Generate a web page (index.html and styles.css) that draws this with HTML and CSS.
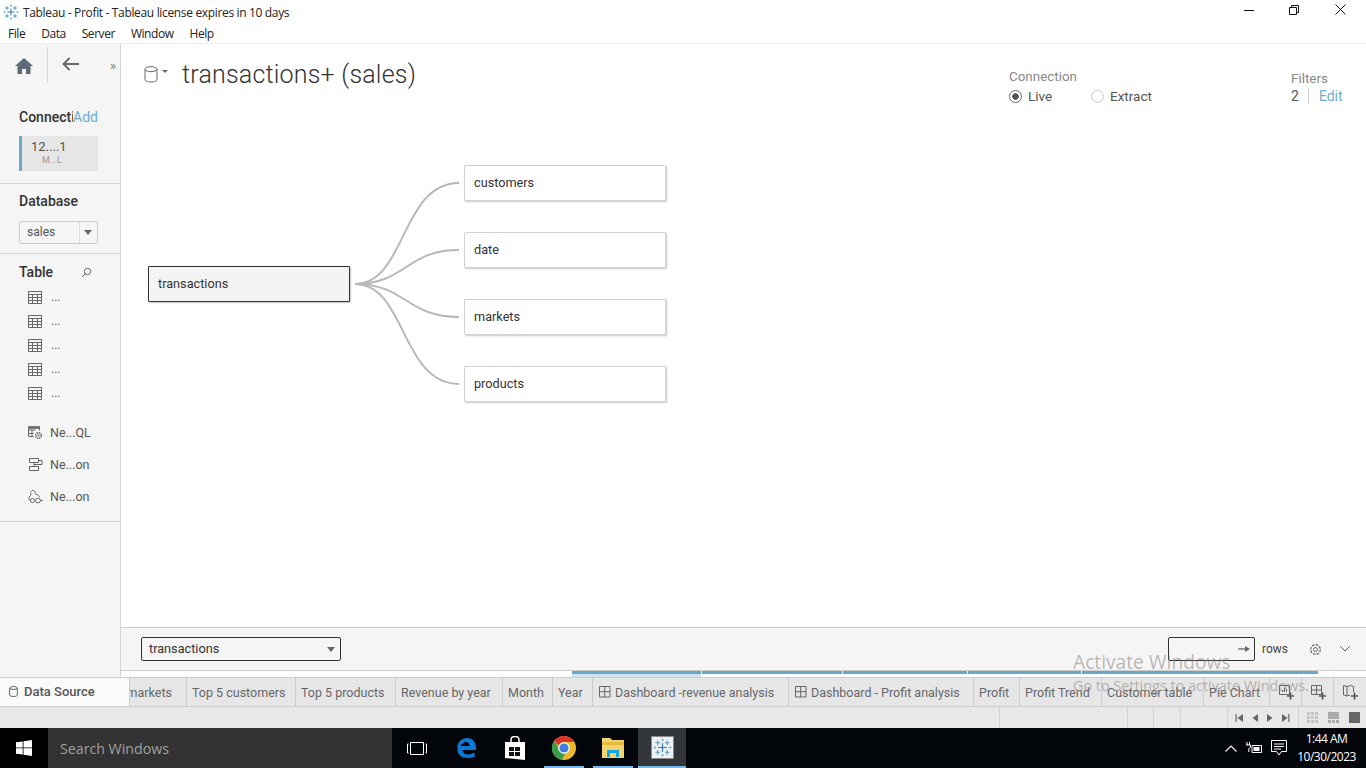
FILE: index.html
```html
<!DOCTYPE html>
<html lang="en">
<head>
<meta charset="utf-8">
<title>Tableau - Profit</title>
<link rel="stylesheet" href="styles.css">
</head>
<body>
<svg class="defs" width="0" height="0" aria-hidden="true">
  <symbol id="grid" viewBox="0 0 14 13">
    <path d="M.5.5h13v12H.5zM.5 3.500h13M.5 6.500h13M.5 9.500h13M4.500 3.500v9M9.500 3.500v9" fill="none" stroke="#666"/>
  </symbol>
  <symbol id="dash" viewBox="0 0 12 12">
    <path d="M.5.5h10.500v10.500H.5zM5.700.5v10.500M.5 5.700h10.500" fill="none" stroke="#666"/>
  </symbol>
  <symbol id="logo" viewBox="0 0 20 20">
    <g fill="none" stroke-width="1.300">
      <path d="M10 5.500v9M5.500 10h9" stroke="#2f78b0"/>
      <path d="M5 2.500v5M2.500 5h5M15 2.500v5M12.500 5h5M5 12.500v5M2.500 15h5M15 12.500v5M12.500 15h5" stroke="#5f9fcb"/>
      <path d="M10 .5v3M8.500 2h3M10 16.500v3M8.500 18h3M2 8.500v3M.5 10h3M18 8.500v3M16.500 10h3" stroke="#8dbbd9"/>
    </g>
  </symbol>
</svg>

<header class="titlebar">
  <svg class="app-logo" width="16" height="16"><use href="#logo"/></svg>
  <span class="title-text">Tableau - Profit - Tableau license expires in 10 days</span>
  <div class="win-controls">
    <svg class="win-btn" width="12" height="12" viewBox="0 0 12 12"><path d="M1 6.500h10" stroke="#111" fill="none"/></svg>
    <svg class="win-btn" width="12" height="12" viewBox="0 0 12 12"><path d="M.5 3.500h7v7h-7zM2.500 3.500v-2h7v7h-2" stroke="#111" fill="none"/></svg>
    <svg class="win-btn" width="12" height="12" viewBox="0 0 12 12"><path d="M.5.5l10 10M10.500.5l-10 10" stroke="#111" fill="none"/></svg>
  </div>
</header>
<nav class="menubar">
  <span>File</span><span>Data</span><span>Server</span><span>Window</span><span>Help</span>
</nav>

<div class="workspace">
  <aside class="sidebar">
    <div class="side-top">
      <svg class="home" width="18" height="16" viewBox="0 0 18 16"><path d="M9 0L0 8h2.500v8h4.500v-5h4v5h4.500V8H18z" fill="#5f6a78"/></svg>
      <span class="side-rule"></span>
      <svg class="back" width="17" height="14" viewBox="0 0 17 14"><path d="M7.500 1L1.500 7l6 6M1.500 7H17" stroke="#666" stroke-width="1.800" fill="none"/></svg>
      <span class="collapse">»</span>
    </div>
    <div class="side-conn">
      <div class="side-head"><b class="clip">Connecti</b><span class="add">Add</span></div>
      <div class="chip"><span class="chip-main">12....1</span><span class="chip-sub">M...L</span></div>
    </div>
    <div class="side-db">
      <b class="side-title">Database</b>
      <div class="db-select"><span class="db-value">sales</span><span class="db-arrow"><i class="caret"></i></span></div>
    </div>
    <div class="side-tables">
      <div class="table-head">
        <b class="side-title">Table</b>
        <svg width="11" height="11" viewBox="0 0 11 11"><circle cx="6.500" cy="4.500" r="3.200" fill="none" stroke="#666"/><path d="M4.200 6.800L1 10" stroke="#666"/></svg>
      </div>
      <ul class="table-list">
        <li><svg width="14" height="13"><use href="#grid"/></svg><span>...</span></li>
        <li><svg width="14" height="13"><use href="#grid"/></svg><span>...</span></li>
        <li><svg width="14" height="13"><use href="#grid"/></svg><span>...</span></li>
        <li><svg width="14" height="13"><use href="#grid"/></svg><span>...</span></li>
        <li><svg width="14" height="13"><use href="#grid"/></svg><span>...</span></li>
      </ul>
      <ul class="new-list">
        <li>
          <svg width="15" height="15" viewBox="0 0 15 15"><path d="M.5 1.500h11v4M.5 1.500v10h5M.5 5h7M.5 8.500h5M4 5v6.500" fill="none" stroke="#666"/><path d="M.5 1h11v3H.5z" fill="#777"/><circle cx="10.500" cy="10.500" r="2.800" fill="none" stroke="#666" stroke-width="1.500" stroke-dasharray="1.500 .7"/><circle cx="10.500" cy="10.500" r="1" fill="#666"/></svg>
          <span>Ne...QL</span>
        </li>
        <li>
          <svg width="15" height="15" viewBox="0 0 15 15"><path d="M1.500 1.500h9v4h-9zM1.500 9.500h9v4h-9zM6 5.500v4M10.500 3.500H14v4H6" fill="none" stroke="#666"/></svg>
          <span>Ne...on</span>
        </li>
        <li>
          <svg width="15" height="15" viewBox="0 0 15 15"><path d="M5 1l2 1.500 .5 2.500 2.500 1 2 2M5 1L2.500 3.500 3 6 1 8v3h1" fill="none" stroke="#777"/><circle cx="4.500" cy="11.500" r="2" fill="none" stroke="#666"/><circle cx="10" cy="11.500" r="2.400" fill="none" stroke="#666"/><path d="M15 11.500h-2.500" stroke="#666"/></svg>
          <span>Ne...on</span>
        </li>
      </ul>
    </div>
  </aside>

  <main class="content">
    <div class="ds-head">
      <div class="ds-title">
        <svg width="15" height="17" viewBox="0 0 15 17"><ellipse cx="7" cy="3.200" rx="6" ry="2.500" fill="none" stroke="#666"/><path d="M1 3.200v10.300c0 1.500 2.800 2.500 6 2.500s6-1 6-2.500V3.200" fill="none" stroke="#666"/></svg>
        <i class="caret caret-sm"></i>
        <h1>transactions+ (sales)</h1>
      </div>
      <div class="ds-options">
        <div class="conn-group">
          <span class="label">Connection</span>
          <div class="radios">
            <span class="radio-item live"><i class="radio on"></i>Live</span>
            <span class="radio-item"><i class="radio"></i>Extract</span>
          </div>
        </div>
        <div class="filter-group">
          <span class="label">Filters</span>
          <div class="filter-row"><span class="count">2</span><a class="edit">Edit</a></div>
        </div>
      </div>
    </div>

    <div class="canvas">
      <svg class="links" width="1245" height="523">
        <g fill="none" stroke="#b8b8b8" stroke-width="2">
          <path d="M234 180C285 180 280 79 338 79"/>
          <path d="M234 180C285 180 285 146 338 146"/>
          <path d="M234 180C285 180 285 213 338 213"/>
          <path d="M234 180C285 180 280 280 338 280"/>
        </g>
      </svg>
      <div class="node root">transactions</div>
      <div class="node n1">customers</div>
      <div class="node n2">date</div>
      <div class="node n3">markets</div>
      <div class="node n4">products</div>
    </div>

    <div class="preview-bar">
      <div class="table-select"><span>transactions</span><i class="caret"></i></div>
      <div class="preview-right">
        <div class="rows-box"><svg width="12" height="8" viewBox="0 0 12 8"><path d="M0 4h8" stroke="#666" stroke-width="1.300"/><path d="M7 1l5 3-5 3z" fill="#666"/></svg></div>
        <span class="rows-label">rows</span>
        <svg class="gear" width="13" height="13" viewBox="0 0 13 13"><circle cx="6.500" cy="6.500" r="4.800" fill="none" stroke="#666" stroke-width="1.300" stroke-dasharray="2.500 1.200"/><circle cx="6.500" cy="6.500" r="2" fill="none" stroke="#666"/></svg>
        <svg width="10" height="6" viewBox="0 0 10 6"><path d="M.5.500L5 5 9.500.500" fill="none" stroke="#555"/></svg>
      </div>
    </div>
    <div class="scroll-strip"><div class="scroll-blue"><i class="s1"></i><i class="s2"></i><i class="s3"></i><i class="s4"></i><i class="s5"></i></div></div>
  </main>
</div>

<div class="tabs">
  <div class="tab-ds">
    <svg width="9" height="11" viewBox="0 0 9 11"><ellipse cx="4.500" cy="2" rx="3.800" ry="1.500" fill="none" stroke="#666"/><path d="M.7 2v7c0 .9 1.700 1.500 3.800 1.500S8.300 9.900 8.300 9V2" fill="none" stroke="#666"/></svg>
    <b>Data Source</b>
  </div>
  <div class="tab t-markets"><span class="clipped">markets</span></div>
  <div class="tab t-cust">Top 5 customers</div>
  <div class="tab t-prod">Top 5 products</div>
  <div class="tab t-rev">Revenue by year</div>
  <div class="tab t-month">Month</div>
  <div class="tab t-year">Year</div>
  <div class="tab t-dash t-d1"><svg width="12" height="12"><use href="#dash"/></svg>Dashboard -revenue analysis</div>
  <div class="tab t-dash t-d2"><svg width="12" height="12"><use href="#dash"/></svg>Dashboard - Profit analysis</div>
  <div class="tab t-profit">Profit</div>
  <div class="tab t-trend">Profit Trend</div>
  <div class="tab t-ctable">Customer table</div>
  <div class="tab t-pie">Pie Chart</div>
  <div class="tab t-add">
    <svg width="16" height="16" viewBox="0 0 16 16"><path d="M.5 1.500h10v9h-10z" fill="none" stroke="#666"/><path d="M3.500 8V6M5.500 8V3.500M7.500 8V5" stroke="#666"/><path d="M11.500 8.500v7M8 12h7" stroke="#555" stroke-width="1.600"/></svg>
  </div>
  <div class="tab t-add">
    <svg width="16" height="16" viewBox="0 0 16 16"><path d="M.5 1.500h10v9h-10zM5.500 1.500v9M.5 6h10" fill="none" stroke="#666"/><path d="M11.500 8.500v7M8 12h7" stroke="#555" stroke-width="1.600"/></svg>
  </div>
  <div class="tab t-add t-last">
    <svg width="16" height="16" viewBox="0 0 16 16"><path d="M.5 1.500L4 2.500 7.500 1.500 10.500 2.500V8M.5 1.500v9.500L4 12l3-1M4 2.500V12" fill="none" stroke="#666"/><path d="M11.500 8.500v7M8 12h7" stroke="#555" stroke-width="1.600"/></svg>
  </div>
</div>

<div class="statusbar">
  <span class="st st1"></span><span class="st st2"></span><span class="st st3"></span><span class="st st4"></span>
  <div class="pager">
    <svg width="8" height="8" viewBox="0 0 8 8"><path d="M.5 0h1.200v8H.5zM8 0v8L2.500 4z" fill="#666"/></svg>
    <svg width="6" height="8" viewBox="0 0 6 8"><path d="M6 0v8L.5 4z" fill="#666"/></svg>
    <svg width="6" height="8" viewBox="0 0 6 8"><path d="M0 0v8l5.500-4z" fill="#666"/></svg>
    <svg width="8" height="8" viewBox="0 0 8 8"><path d="M6.300 0h1.200v8H6.300zM0 0v8l5.500-4z" fill="#666"/></svg>
  </div>
  <div class="viewsize">
    <svg width="11" height="11" viewBox="0 0 11 11"><path d="M0 0h3v3H0zM4 0h3v3H4zM8 0h3v3H8zM0 4h3v3H0zM4 4h3v3H4zM8 4h3v3H8zM0 8h3v3H0zM4 8h3v3H4zM8 8h3v3H8z" fill="#c4c4c4"/></svg>
    <svg width="11" height="11" viewBox="0 0 11 11"><path d="M0 0h11v7H0zM0 8h3v3H0zM4 8h3v3H4zM8 8h3v3H8z" fill="#aaa"/></svg>
    <svg width="11" height="11" viewBox="0 0 11 11"><path d="M0 0h11v11H0z" fill="#666"/></svg>
  </div>
</div>

<footer class="taskbar">
  <div class="start">
    <svg width="16" height="16" viewBox="0 0 16 16"><path d="M0 2.300l6.700-.9v6.100H0zM7.500 1.300L16 0v7.500H7.500zM0 8.300h6.700v6.200L0 13.700zM7.500 8.300H16V16l-8.500-1.200z" fill="#fff"/></svg>
  </div>
  <div class="search">Search Windows</div>
  <div class="task-icons">
    <div class="task"><svg width="20" height="13" viewBox="0 0 20 13"><path d="M3.500.5h13v12h-13zM1.500 2H.5v9h1M18.500 2h1v9h-1" fill="none" stroke="#fff"/></svg></div>
    <div class="task"><svg width="20" height="20" viewBox="0 0 20 20"><path d="M1 9.500C2 3.500 6 0 11 0c5.500 0 9 4 9 10.500v1.500H6.500c.2 3 2.500 4.500 5.300 4.500 2.500 0 4.600-.8 6.700-2v4.500C16.500 19.500 14 20 11.500 20 5 20 1.500 16 1.500 11.500c0-3.500 2-6.500 5-8.200C5 5 4.300 6.500 4 8h9.500c0-2.500-1.200-4.300-4-4.300" fill="#0a78d7"/></svg></div>
    <div class="task"><svg width="20" height="24" viewBox="0 0 20 24"><path d="M0 6h20v18l-20-2z" fill="#fff"/><path d="M6 6V3.500C6 1.500 8 .5 10 .5s4 1 4 3V6" fill="none" stroke="#fff" stroke-width="1.500"/><path d="M4 11h5v4H4zM10 11h5v4h-5zM4 16h5v4H4zM10 16h5v4h-5z" fill="#111"/></svg></div>
    <div class="task open"><svg width="24" height="24" viewBox="0 0 24 24"><circle cx="12" cy="12" r="12" fill="#e8b92b"/><path d="M12 0a12 12 0 0 1 10.400 6H12a6 6 0 0 0-5.600 3.500L2.200 4.800A12 12 0 0 1 12 0z" fill="#d8352a"/><path d="M2.200 4.800l5.300 9.200A6 6 0 0 0 13 18L9.800 23.800A12 12 0 0 1 2.200 4.800z" fill="#3b9c4a"/><circle cx="12" cy="12" r="5.800" fill="#fff"/><circle cx="12" cy="12" r="4.600" fill="#3f7ee0"/></svg></div>
    <div class="task open"><svg width="22" height="20" viewBox="0 0 22 20"><path d="M0 0h8l2 2h12v18H0z" fill="#f2d46f"/><path d="M0 4h22v3H0z" fill="#e8bb3f"/><path d="M5 19v-7h12v7h-3v-4H8v4z" fill="#15a6e0"/></svg></div>
    <div class="task active"><span class="tb-tile"><svg width="19" height="19"><use href="#logo"/></svg></span></div>
  </div>
  <div class="tray">
    <svg width="12" height="7" viewBox="0 0 12 7"><path d="M.5 6.500L6 1l5.500 5.500" fill="none" stroke="#fff" stroke-width="1.100"/></svg>
    <svg width="16" height="12" viewBox="0 0 16 12"><path d="M6 3.500h9.500v7H6z" fill="none" stroke="#fff"/><path d="M7.500 5h6v4h-6z" fill="#fff"/><path d="M1 0v3M3.500 0v3M0 3h4.500v2L2.800 7v3" fill="none" stroke="#fff"/></svg>
    <svg width="16" height="16" viewBox="0 0 16 16"><path d="M.5.500h15v11h-5L8 15l-2.500-3.500h-5zM3 4h10M3 6.500h10M3 9h7" fill="none" stroke="#fff"/></svg>
    <div class="clock"><span>1:44 AM</span><span>10/30/2023</span></div>
  </div>
</footer>

<div class="watermark">
  <span class="wm-big">Activate Windows</span>
  <span class="wm-small">Go to Settings to activate Windows.</span>
</div>
</body>
</html>
```
FILE: styles.css
```css
* { box-sizing: border-box; }
html, body { margin: 0; padding: 0; }
body {
  width: 1366px; height: 768px; overflow: hidden; position: relative;
  display: flex; flex-direction: column;
  font-family: Roboto, "Liberation Sans", sans-serif; color: #444; background: #fff;
}
.defs { position: absolute; }
ul { list-style: none; margin: 0; padding: 0; }

.titlebar { height: 24px; display: flex; align-items: center; padding-left: 3px; flex: none; }
.app-logo { margin-right: 4px; }
.title-text { font: 12px "Open Sans", sans-serif; color: #222; letter-spacing: -.34px; }
.win-controls { margin-left: auto; display: flex; gap: 34px; padding-right: 19px; margin-top: -4px; }
.menubar { height: 20px; display: flex; align-items: center; padding-left: 8px; gap: 16px; border-bottom: 1px solid #eee; flex: none; font: 12px "Open Sans", sans-serif; color: #222; letter-spacing: -.45px; }

.workspace { height: 633px; display: flex; flex: none; }
.sidebar { width: 121px; flex: none; background: #f5f5f5; border-right: 1px solid #d4d4d4; display: flex; flex-direction: column; }
.side-top { height: 56px; position: relative; display: flex; align-items: flex-start; padding: 13px 0 0 15px; }
.side-rule { width: 1px; height: 35px; background: #d8d8d8; margin: -10px 14px 0 14px; }
.back { margin-top: 0; }
.home { margin-top: 1px; }
.collapse { margin-left: 31px; font-size: 13px; color: #777; margin-top: 1px; }
.side-conn { height: 84px; padding: 8px 0 0 19px; border-bottom: 1px solid #d4d4d4; }
.side-head { display: flex; height: 17px; align-items: center; font-size: 14px; }
.clip { width: 54px; overflow: hidden; color: #333; font-weight: 500; font-size: 14px; }
.add { color: #6cacd0; }
.chip { width: 79px; height: 35px; margin-top: 11px; background: #e6e6e6; border-left: 3px solid #6aa9c9; display: flex; flex-direction: column; align-items: flex-start; padding-left: 9px; line-height: 1; }
.chip-main { font-size: 13px; margin-top: 4px; color: #555; }
.chip-sub { font-size: 9px; margin-top: 3px; margin-left: 11px; color: #999; }
.side-db { height: 70px; padding: 9px 0 0 19px; border-bottom: 1px solid #d4d4d4; }
.side-title { display: block; font-size: 14px; font-weight: 500; color: #333; line-height: 17px; }
.db-select { width: 79px; height: 23px; margin-top: 11px; border: 1px solid #ccc; border-radius: 2px; background: #f5f5f5; display: flex; align-items: center; font-size: 12px; color: #555; padding-bottom: 1px; }
.db-value { flex: 1; padding-left: 7px; }
.db-arrow { width: 18px; height: 21px; margin-bottom: -1px; border-left: 1px solid #ddd; display: flex; align-items: center; justify-content: center; padding-right: 2px; }
.caret { display: inline-block; width: 0; height: 0; border-left: 4px solid transparent; border-right: 4px solid transparent; border-top: 5px solid #666; }
.caret-sm { border-left-width: 3px; border-right-width: 3px; border-top-width: 3px; margin: -6px 0 0 3px; }
.side-tables { height: 268px; border-bottom: 1px solid #d4d4d4; padding: 10px 0 0 0; }
.table-head { display: flex; align-items: center; justify-content: space-between; padding: 0 28px 0 19px; height: 17px; }
.table-list { margin-top: 4px; }
.table-list li { height: 24px; display: flex; align-items: center; padding-left: 28px; gap: 9px; font-size: 12px; color: #666; }
.new-list { margin-top: 11px; }
.new-list li { height: 32px; display: flex; align-items: center; padding-left: 28px; gap: 7px; font-size: 12.500px; color: #555; }

.content { width: 1245px; display: flex; flex-direction: column; position: relative; }
.ds-head { height: 60px; position: relative; display: flex; justify-content: space-between; flex: none; }
.ds-title { display: flex; align-items: center; padding: 0 0 0 23px; height: 60px; }
.ds-title h1 { margin: 0 0 0 14px; font-size: 25px; font-weight: 300; color: #333; white-space: nowrap; letter-spacing: .2px; }
.ds-options { display: flex; padding-top: 25px; }
.conn-group { width: 282px; }
.label { display: block; font-size: 13.400px; color: #888; line-height: 16px; }
.radios { display: flex; margin-top: 3px; font-size: 13.500px; color: #555; height: 16px; align-items: center; }
.radio-item { display: flex; align-items: center; gap: 6px; }
.radio-item.live { width: 82px; }
.radio { width: 13px; height: 13px; border-radius: 50%; border: 1px solid #c8c8c8; background: #fff; }
.radio.on { border-color: #666; background: radial-gradient(circle, #555 0 3px, #fff 3.500px); }
.filter-group { width: 75px; padding-top: 2px; }
.filter-row { display: flex; margin-top: 1px; font-size: 14px; height: 16px; align-items: center; }
.count { padding-right: 9px; border-right: 1px solid #ccc; color: #555; height: 16px; line-height: 16px; }
.edit { margin-left: 10px; color: #6cacd0; }

.canvas { height: 523px; position: relative; flex: none; }
.links { position: absolute; left: 0; top: 0; }
.node { position: absolute; width: 202px; height: 36px; background: #fff; border: 1px solid #d2d2d2; border-radius: 1px; box-shadow: 1px 1px 2px rgba(0,0,0,.22); font-size: 12.700px; color: #333; display: flex; align-items: center; padding: 0 0 2px 9px; left: 343px; }
.node.root { left: 27px; top: 162px; background: #f4f4f4; border-color: #333; }
.n1 { top: 61px; }
.n2 { top: 128px; }
.n3 { top: 195px; }
.n4 { top: 262px; }

.preview-bar { height: 44px; flex: none; background: #f5f5f5; border-top: 1px solid #ccc; border-bottom: 1px solid #ccc; display: flex; align-items: center; justify-content: space-between; padding: 0 16px 0 20px; }
.table-select { width: 200px; height: 24px; border: 1px solid #333; border-radius: 2px; background: #f5f5f5; display: flex; align-items: center; justify-content: space-between; padding: 0 5px 2px 7px; font-size: 12.700px; color: #333; }
.table-select .caret { margin-top: 2px; }
.preview-right { display: flex; align-items: center; }
.rows-box { width: 87px; height: 24px; border: 1px solid #333; border-radius: 2px; display: flex; align-items: center; justify-content: flex-end; padding-right: 4px; }
.rows-label { font-size: 12px; margin-left: 7px; width: 47px; color: #444; }
.gear { margin-right: 18px; }
.scroll-strip { height: 6px; flex: none; background: #fff; padding-left: 451px; }
.scroll-blue { display: flex; height: 6px; gap: 1px; width: 747px; }
.scroll-blue i { display: block; height: 3px; background: #66a8cb; }
.s1 { width: 129px; height: 6px !important; background: linear-gradient(#66a8cb 50%, #cfe2ee 50%) !important; }
.s2 { width: 140px; }
.s3 { width: 124px; }
.s4 { width: 113px; }
.s5 { width: 236px; }

.tabs { height: 30px; flex: none; display: flex; background: #e6e6e6; border-top: 1px solid #ccc; border-bottom: 1px solid #ccc; font-size: 12.500px; color: #666; }
.tab-ds { width: 130px; height: 30px; margin-top: -1px; background: #fafafa; border-top: 1px solid #ccc; border-bottom: 1px solid #ccc; border-right: 1px solid #ccc; display: flex; align-items: center; padding: 0 0 1px 9px; gap: 6px; font-size: 13px; }
.tab-ds b { font-weight: 500; color: #555; }
.tab { flex: none; border-right: 1px solid #ccc; display: flex; align-items: center; padding-left: 5px; gap: 6px; white-space: nowrap; overflow: hidden; }
.t-dash { padding-left: 6px; gap: 4px; }
.t-markets { width: 57px; padding-left: 0; }
.clipped { margin-left: 0; width: 42px; overflow: hidden; direction: rtl; }
.t-cust { width: 109px; }
.t-prod { width: 100px; }
.t-rev { width: 107px; }
.t-month { width: 50px; }
.t-year { width: 40px; }
.t-d1 { width: 196px; }
.t-d2 { width: 185px; }
.t-profit { width: 46px; }
.t-trend { width: 82px; }
.t-ctable { width: 102px; }
.t-pie { width: 66px; }
.t-add { width: 32px; padding-left: 9px; }
.t-last { flex: 1; border-right: 0; }

.statusbar { height: 21px; flex: none; background: #e8e8e8; position: relative; display: flex; justify-content: flex-end; }
.st { position: absolute; top: 0; width: 1px; height: 21px; background: #d0d0d0; }
.st1 { left: 999px; }
.st2 { left: 1127px; }
.st3 { left: 1153px; }
.st4 { left: 1180px; }
.pager { width: 72px; border-left: 1px solid #d0d0d0; border-right: 1px solid #d0d0d0; display: flex; align-items: center; padding-left: 7px; gap: 9px; }
.viewsize { width: 67px; display: flex; align-items: center; padding-left: 8px; gap: 10px; }

.taskbar { height: 40px; flex: none; background: #02060b; display: flex; align-items: stretch; }
.start { width: 48px; display: flex; align-items: center; justify-content: center; background: #000; }
.search { width: 344px; background: #333; color: #a0a0a0; font: 14.200px "Open Sans", sans-serif; display: flex; align-items: center; padding-left: 12px; }
.task-icons { display: flex; padding-left: 0; }
.task { width: 49px; display: flex; align-items: center; justify-content: center; position: relative; }
.task.open::after { content: ""; position: absolute; left: 5px; right: 4px; bottom: 0; height: 2px; background: #76b9ed; }
.task.active { background: #33373c; margin-left: 1px; width: 48px; border-bottom: 2px solid #76b9ed; }
.tb-tile { width: 23px; height: 23px; background: #eef2f5; border: 1px solid #888; display: flex; align-items: center; justify-content: center; }
.tray { margin-left: auto; display: flex; align-items: center; padding-right: 11px; gap: 9px; }
.clock { display: flex; flex-direction: column; align-items: center; font: 12px/18px "Open Sans", sans-serif; color: #fff; margin-left: 2px; width: 57px; letter-spacing: -.5px; white-space: nowrap; }

.watermark { position: absolute; left: 1073px; top: 649px; display: flex; flex-direction: column; pointer-events: none; font-family: "Open Sans", sans-serif; color: rgba(120,120,120,.5); white-space: nowrap; }
.wm-big { font-size: 19.200px; line-height: 26px; }
.wm-small { font-size: 14.400px; line-height: 20px; margin-top: 1px; }
```
